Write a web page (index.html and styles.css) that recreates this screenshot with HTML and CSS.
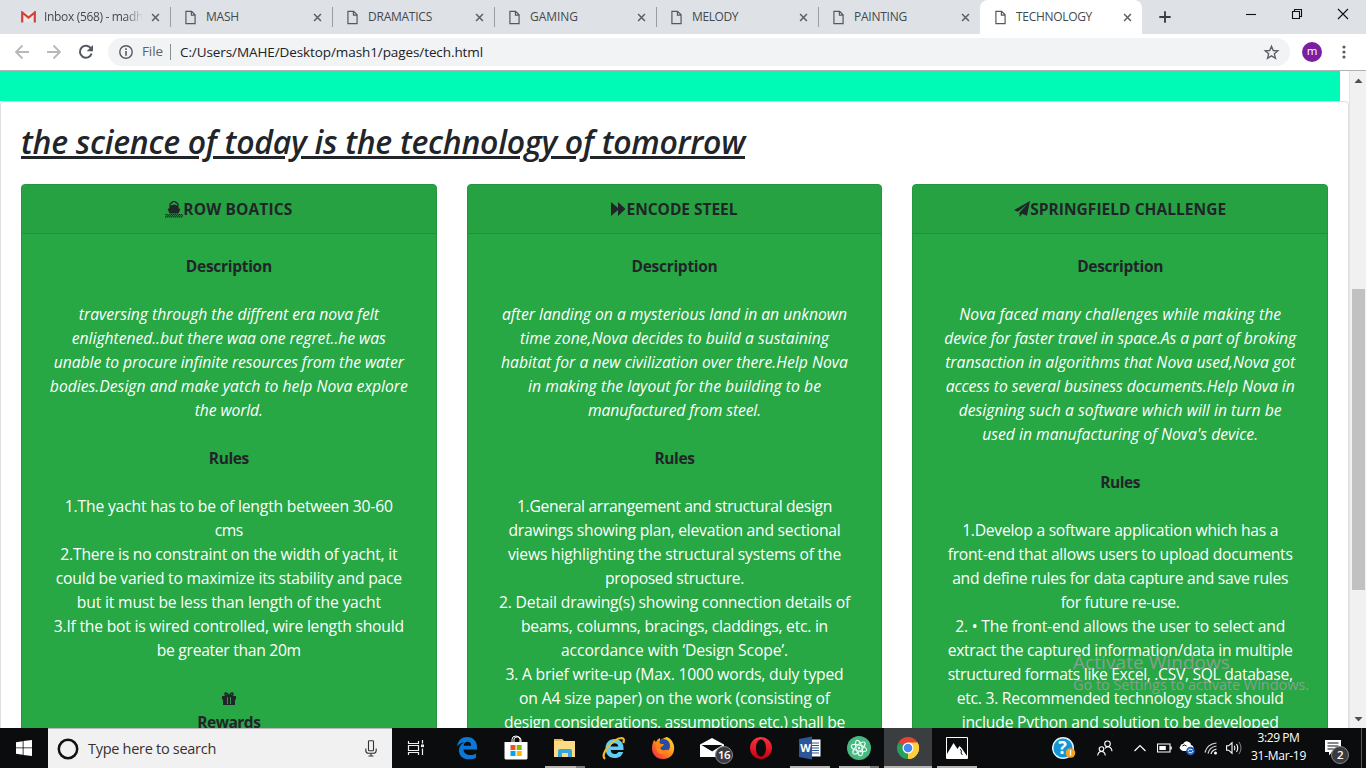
FILE: index.html
```html
<!DOCTYPE html>
<html lang="en">
<head>
<meta charset="utf-8">
<title>TECHNOLOGY</title>
<link rel="stylesheet" href="styles.css">
</head>
<body>
<svg class="defs" width="0" height="0">
  <symbol id="page" viewBox="0 0 12 15"><path d="M1 .8h6.2L11 4.6v9.6H1z M7 1v4h4" fill="none" stroke="#55585c" stroke-width="1.3"/></symbol>
  <symbol id="x" viewBox="0 0 10 10"><path d="M1.2 1.2l7.6 7.6M8.8 1.2L1.2 8.8" stroke="#5b5f63" stroke-width="1.7" fill="none"/></symbol>
</svg>

<header class="tabs">
  <div class="tab first">
    <svg class="gmail" viewBox="0 0 15 12"><path d="M1 1h13v10H1z" fill="#e8e8e8"/><path d="M1.2 11.5V1.5l6.3 5 6.3-5v10" fill="none" stroke="#d93f33" stroke-width="2.2"/></svg>
    <span class="tt fade"><span data-w="99">Inbox (568) - madh</span></span><svg class="cl"><use href="#x"/></svg>
  </div>
  <div class="tab"><svg class="pg"><use href="#page"/></svg><span class="tt"><span data-w="33">MASH</span></span><svg class="cl"><use href="#x"/></svg></div>
  <div class="tab"><svg class="pg"><use href="#page"/></svg><span class="tt"><span data-w="64">DRAMATICS</span></span><svg class="cl"><use href="#x"/></svg></div>
  <div class="tab"><svg class="pg"><use href="#page"/></svg><span class="tt"><span data-w="48">GAMING</span></span><svg class="cl"><use href="#x"/></svg></div>
  <div class="tab"><svg class="pg"><use href="#page"/></svg><span class="tt"><span data-w="46">MELODY</span></span><svg class="cl"><use href="#x"/></svg></div>
  <div class="tab"><svg class="pg"><use href="#page"/></svg><span class="tt"><span data-w="53">PAINTING</span></span><svg class="cl"><use href="#x"/></svg></div>
  <div class="tab active"><svg class="pg"><use href="#page"/></svg><span class="tt"><span data-w="76">TECHNOLOGY</span></span><svg class="cl"><use href="#x"/></svg></div>
  <svg class="plus" viewBox="0 0 12 12"><path d="M6 .3v11.4M.3 6h11.4" stroke="#3c4043" stroke-width="1.9"/></svg>
  <svg class="wins" width="106" height="14" viewBox="0 0 106 14"><g fill="none" stroke="#111" stroke-width="1.1"><path d="M0 7.5h10"/><path d="M46.5 4.5h7v7h-7z M48.5 4.5v-2h7v7h-2"/><path d="M92 2l10 10M102 2L92 12"/></g></svg>
</header>

<nav class="toolbar">
  <svg class="nav" width="108" height="34" viewBox="0 0 108 34"><g fill="none" stroke="#b6b9bc" stroke-width="1.8"><path d="M29 17H16.500M22.500 10.500L16 17l6.500 6.500"/><path d="M47 17h13M53.500 10.500L60 17l-6.500 6.500"/></g><path d="M91 13.500a6 6 0 1 0 .6 5.200" fill="none" stroke="#55595e" stroke-width="2"/><path d="M93 10v6.300h-6.300z" fill="#55595e"/></svg>
  <div class="omni">
    <svg class="info" viewBox="0 0 14 14"><circle cx="7" cy="7" r="6.200" fill="none" stroke="#55595e" stroke-width="1.400"/><path d="M7 3.300v1.600M7 6v4.700" stroke="#55595e" stroke-width="1.600"/></svg>
    <span class="file"><span data-w="21">File</span></span>
    <span class="url"><span data-w="303">C:/Users/MAHE/Desktop/mash1/pages/tech.html</span></span>
    <svg class="star" viewBox="0 0 24 24"><path d="M12 3.200l2.500 6 6.500.5-5 4.200 1.600 6.300L12 16.800l-5.600 3.400L8 13.900 3 9.700l6.500-.5z" fill="none" stroke="#5b5f63" stroke-width="1.900"/></svg>
  </div>
  <span class="avatar">m</span>
  <svg class="dots" viewBox="0 0 4 14"><g fill="#5b5f63"><circle cx="2" cy="2" r="1.600"/><circle cx="2" cy="7" r="1.600"/><circle cx="2" cy="12" r="1.600"/></g></svg>
</nav>

<div class="view">
  <main class="page">
    <div class="strip"></div>
    <section class="outer">
      <h2><span data-w="724">the science of today is the technology of tomorrow</span></h2>
      <div class="deck">
        <article class="card">
          <div class="head"><svg width="18" height="17" viewBox="0 0 18 17"><path d="M4.800 4.600Q5 1.600 7.600 1.300L8 .3h2l.4 1q2.600.3 2.800 3.300" fill="none" stroke="#212529" stroke-width="1.200"/><path d="M9 3.600l4.600 1.200v2.400l1.700.8-1.800 4.500h-9L2.700 8l1.700-.8V4.800z" fill="#212529"/><path d="M0 13.500h18M0 15.800h18" stroke="#212529" stroke-width="1.200" stroke-dasharray="1.300 .7"/><path d="M1 14.700h17" stroke="#212529" stroke-width="1.100" stroke-dasharray="1.300 .7"/></svg><span data-w="109">ROW BOATICS</span></div>
          <div class="body">
            <b><span data-w="86">Description</span></b>
            <p class="it"><span data-w="300">traversing through the diffrent era nova felt</span><span data-w="314">enlightened..but there waa one regret..he was</span><span data-w="350">unable to procure infinite resources from the water</span><span data-w="358">bodies.Design and make yatch to help Nova explore</span><span data-w="68">the world.</span></p>
            <b><span data-w="40">Rules</span></b>
            <p><span data-w="328">1.The yacht has to be of length between 30-60</span><span data-w="28">cms</span><span data-w="337">2.There is no constraint on the width of yacht, it</span><span data-w="346">could be varied to maximize its stability and pace</span><span data-w="304">but it must be less than length of the yacht</span><span data-w="350">3.If the bot is wired controlled, wire length should</span><span data-w="144">be greater than 20m</span></p>
            <svg class="gift" width="14" height="13" viewBox="0 0 14 13"><path d="M0 4h14v3.500h-1V13H1V7.500H0z" fill="#212529"/><path d="M5.500 5v7M8.500 5v7" stroke="#28a745" stroke-width=".9"/><path d="M7 4C5 .2 2.500.2 3 2.500 3.200 3.600 5 3.900 7 4 9 3.900 10.800 3.600 11 2.500 11.500.2 9 .2 7 4z" fill="none" stroke="#212529" stroke-width="1.400"/></svg>
            <b><span data-w="63">Rewards</span></b>
          </div>
        </article>
        <article class="card">
          <div class="head"><svg width="15" height="14" viewBox="0 0 15 14"><path d="M0 0l7 6V0l7.500 7L7 14V8l-7 6z" fill="#212529"/></svg><span data-w="111">ENCODE STEEL</span></div>
          <div class="body">
            <b><span data-w="86">Description</span></b>
            <p class="it"><span data-w="345">after landing on a mysterious land in an unknown</span><span data-w="309">time zone,Nova decides to build a sustaining</span><span data-w="347">habitat for a new civilization over there.Help Nova</span><span data-w="293">in making the layout for the building to be</span><span data-w="173">manufactured from steel.</span></p>
            <b><span data-w="40">Rules</span></b>
            <p><span data-w="315">1.General arrangement and structural design</span><span data-w="332">drawings showing plan, elevation and sectional</span><span data-w="333">views highlighting the structural systems of the</span><span data-w="139">proposed structure.</span><span data-w="351">2. Detail drawing(s) showing connection details of</span><span data-w="307">beams, columns, bracings, claddings, etc. in</span><span data-w="227">accordance with ‘Design Scope’.</span><span data-w="338">3. A brief write-up (Max. 1000 words, duly typed</span><span data-w="311">on A4 size paper) on the work (consisting of</span><span data-w="341">design considerations, assumptions etc.) shall be</span></p>
          </div>
        </article>
        <article class="card">
          <div class="head"><svg width="16" height="16" viewBox="0 0 16 16"><path d="M16 0L0 9l3.800 1.700L13.500 3 5.500 11.500V16l2.700-3.200 4.800 2z" fill="#212529"/></svg><span data-w="196">SPRINGFIELD CHALLENGE</span></div>
          <div class="body">
            <b><span data-w="86">Description</span></b>
            <p class="it"><span data-w="322">Nova faced many challenges while making the</span><span data-w="352">device for faster travel in space.As a part of broking</span><span data-w="350">transaction in algorithms that Nova used,Nova got</span><span data-w="349">access to several business documents.Help Nova in</span><span data-w="323">designing such a software which will in turn be</span><span data-w="276">used in manufacturing of Nova's device.</span></p>
            <b><span data-w="40">Rules</span></b>
            <p><span data-w="316">1.Develop a software application which has a</span><span data-w="345">front-end that allows users to upload documents</span><span data-w="336">and define rules for data capture and save rules</span><span data-w="119">for future re-use.</span><span data-w="330">2. • The front-end allows the user to select and</span><span data-w="345">extract the captured information/data in multiple</span><span data-w="345">structured formats like Excel, .CSV, SQL database,</span><span data-w="327">etc. 3. Recommended technology stack should</span><span data-w="317">include Python and solution to be developed</span></p>
          </div>
        </article>
      </div>
    </section>
  </main>
  <aside class="scroll">
    <svg width="9" height="5" viewBox="0 0 9 5"><path d="M.5 5l4-4.500 4 4.500z" fill="#505050"/></svg>
    <div class="thumb"></div>
    <svg class="down" width="9" height="5" viewBox="0 0 9 5"><path d="M.5 0l4 4.500L8.500 0z" fill="#505050"/></svg>
  </aside>
  <div class="mark"><div class="m1"><span data-w="157">Activate Windows</span></div><div class="m2"><span data-w="236">Go to Settings to activate Windows.</span></div></div>
</div>

<footer class="bar">
  <div class="start"><svg width="16" height="16" viewBox="0 0 16 16"><path d="M0 2.200L6.700 1.200v6.300H0zM7.500 1L16 0v7.500H7.500zM0 8.300h6.700v6.400L0 13.800zM7.500 8.300H16V16l-8.500-1.100z" fill="#fff"/></svg></div>
  <div class="search">
    <svg width="22" height="22" viewBox="0 0 22 22"><circle cx="11" cy="11" r="9.200" fill="none" stroke="#111" stroke-width="2.500"/></svg>
    <span class="st"><span data-w="128">Type here to search</span></span>
    <svg class="mic" width="12" height="17" viewBox="0 0 12 17"><g fill="none" stroke="#333" stroke-width="1.100"><rect x="3.500" y=".7" width="5" height="10" rx=".8"/><path d="M.8 8.500v2q0 2.800 3 2.800h4.400q3 0 3-2.800v-2M6 13.500v2.500M3.500 16h5"/></g></svg>
  </div>
  <div class="cell tv"><svg width="18" height="16" viewBox="0 0 18 16"><g fill="none" stroke="#eee" stroke-width="1.200"><path d="M1.500 1v2.500h10V1M1.500 15v-2.500h10V15M1.500 5.500h10v5h-10zM15.500 0v3.500M15.500 8.500V15"/><path d="M14 5.800h3" stroke-width="2.600"/></g></svg></div>
  <div class="cell"><svg width="22" height="24" viewBox="0 0 22 24"><path d="M1 10.500C2 4 6 1 11 1c6.500 0 10 4.500 10 10v2.500H7.500c.2 4 3.500 5.500 6.500 5.500 2.400 0 4.500-.7 6-1.600v4.300c-2 1.200-4.300 1.600-7 1.600-6 0-10-3.300-10-8.800 0-3.700 2-6.600 5.500-8.200C5.500 6.800 3 8 1 10.500zM7.600 9.700h7.600c0-2.600-1.400-3.900-3.600-3.900-2.200 0-3.600 1.500-4 3.900z" fill="#0b78d6"/></svg></div>
  <div class="cell"><svg width="24" height="26" viewBox="0 0 24 26"><path d="M8 8V4.500q0-3.500 4-3.500t4 3.500V8M10 7V4q0-2 3.500-2T17 5v2" fill="none" stroke="#fff"/><path d="M.5 7h23v16q0 1.500-1.500 1.500H2Q.5 24.500.5 23z" fill="#fff"/><path d="M6.500 10h5v5h-5z" fill="#f25022"/><path d="M12.700 10h5v5h-5z" fill="#7fba00"/><path d="M6.500 16h5v5h-5z" fill="#00a4ef"/><path d="M12.700 16h5v5h-5z" fill="#ffb900"/></svg></div>
  <div class="cell run two"><svg width="22" height="20" viewBox="0 0 22 20"><path d="M0 1h8l2 2h11v16H0z" fill="#fbdc85"/><path d="M0 1h8l1.500 2H0z" fill="#e8b64a"/><path d="M4 19v-6q0-2 2-2h10q2 0 2 2v6h-4v-4H8v4z" fill="#36a5de"/></svg></div>
  <div class="cell"><svg width="24" height="25" viewBox="0 0 24 25"><path d="M12.500 3C18 3 21.500 6.500 21.500 12v2H8.700c.3 3 2 4 4 4 1.800 0 2.800-.6 3.500-2h5c-1.500 4.500-4.500 6-8.700 6C7 22 3.500 18 3.500 12.500S7 3 12.500 3zM8.700 10.500h7.600c-.3-2.300-1.800-3.300-3.700-3.300-2 0-3.500 1-3.900 3.300z" fill="#62cdf4"/><path d="M3 23C-3 18 12 2 20 2q3 .5 1.200 5" fill="none" stroke="#f0bc22" stroke-width="2.200"/></svg></div>
  <div class="cell"><svg width="24" height="24" viewBox="0 0 24 24"><defs><linearGradient id="ff" x1="1" y1="0" x2="0" y2="1"><stop offset="0" stop-color="#ffe536"/><stop offset=".5" stop-color="#ff8a16"/><stop offset="1" stop-color="#ee1a55"/></linearGradient></defs><path d="M3 4l2 2q1-3 4-4v2q6-3 7-3 5 2 6.800 8C24.500 17 20 23 12 23 5 23 1 18 1 12.500 1 9 2 6 3 4z" fill="url(#ff)"/><path d="M9 4q3-2 7 0 3 2 3 6 0 5-5 6-4-1-5-4l2-2-3-2z" fill="#284da0"/><path d="M5 7q4-1 5 1h3q-1 3-4 3 1 4 5 3 3-.5 4 0-2 4-7 4-6-1-6-8z" fill="#ff8519"/></svg></div>
  <div class="cell mail"><svg width="24" height="20" viewBox="0 0 24 20"><path d="M0 6.500L12 0l12 6.500V19H0z" fill="#fff"/><path d="M1.500 7h21L12 13.500z" fill="#0b0c0d"/><path d="M0 7.500l12 6.500" stroke="#fff" fill="none"/></svg><span class="badge">16</span></div>
  <div class="cell"><svg width="24" height="24" viewBox="0 0 24 24"><defs><linearGradient id="op" x1="0" y1="0" x2="0" y2="1"><stop offset="0" stop-color="#ff3340"/><stop offset="1" stop-color="#c50012"/></linearGradient></defs><path fill-rule="evenodd" d="M12 1a11 11 0 1 0 0 22 11 11 0 1 0 0-22zM12 3.500c3 0 5 3.500 5 8.500s-2 8.500-5 8.500-5-3.500-5-8.500 2-8.500 5-8.500z" fill="url(#op)"/></svg></div>
  <div class="cell run"><svg width="24" height="24" viewBox="0 0 24 24"><path d="M12 3.500h10.500v17H12z" fill="#fff"/><path d="M14 7h7M14 9.500h7M14 12h7M14 14.500h7M14 17h7" stroke="#2b579a" stroke-width="1.100"/><path d="M1 3l13-2.500v23L1 21z" fill="#2b579a"/><text x="7.500" y="16" text-anchor="middle" class="w">W</text></svg></div>
  <div class="cell run two"><svg width="24" height="24" viewBox="0 0 24 24"><circle cx="12" cy="12" r="12" fill="#47b881"/><g fill="none" stroke="#e5fff0" stroke-width="1.100"><ellipse cx="12" cy="12" rx="3" ry="8" transform="rotate(-15 12 12)"/><ellipse cx="12" cy="12" rx="3" ry="8" transform="rotate(45 12 12)"/><ellipse cx="12" cy="12" rx="3" ry="8" transform="rotate(105 12 12)"/></g><circle cx="12" cy="12" r="1.200" fill="#fff"/></svg></div>
  <div class="cell on"><svg width="24" height="24" viewBox="0 0 24 24"><path d="M12 12L2.470 6.500a11 11 0 0 1 19.060 0z" fill="#e14334"/><path d="M12 12L21.530 6.500A11 11 0 0 1 12 23z" fill="#fccf3d"/><path d="M12 12v11A11 11 0 0 1 2.470 6.500z" fill="#26a15b"/><path d="M12 6.500h9.530A11 11 0 0 1 12 23l5-8z" fill="#fccf3d"/><circle cx="12" cy="12" r="5.500" fill="#fff"/><circle cx="12" cy="12" r="4.300" fill="#4587f3"/></svg></div>
  <div class="cell run"><svg width="22" height="22" viewBox="0 0 22 22"><path d="M.5.500h21v21H.5z" fill="none" stroke="#fff"/><path d="M1 17l6.500-11 4 6 2-3 2 2 5.500 8v2H1z" fill="#fff"/><path d="M14 12l1.500 2-.5 2 1.500 2" stroke="#111" fill="none"/></svg></div>

  <div class="tray">
    <div class="ti help"><svg width="24" height="24" viewBox="0 0 24 24"><circle cx="11" cy="12" r="10.300" fill="#1693d2" stroke="#dff3fb" stroke-width="1.500"/><text x="10.500" y="18" text-anchor="middle" class="q">?</text><circle cx="18.500" cy="17" r="4.800" fill="#f5a51b"/><path d="M18.500 14v5.500" stroke="#fff" stroke-width="1.300"/></svg></div>
    <div class="ti people"><svg width="16" height="17" viewBox="0 0 16 17"><g fill="none" stroke="#fff" stroke-width="1.100"><circle cx="10.500" cy="3.800" r="2.800"/><circle cx="4.500" cy="9" r="2.300"/><path d="M.7 15.500q.5-4 3.800-4t3.800 4M8 8.500q2.500-3.200 5.500-.8 1.300 1 1.500 3.500"/></g></svg></div>
    <div class="ti chev"><svg width="12" height="8" viewBox="0 0 12 8"><path d="M.5 7L6 1.500 11.500 7" fill="none" stroke="#fff" stroke-width="1.200"/></svg></div>
    <div class="ti bat"><svg width="15" height="10" viewBox="0 0 15 10"><path d="M.5 1h12.500v8H.5zM14.200 3.500v3" fill="none" stroke="#fff" stroke-width="1.100"/><path d="M2.300 3h6.500v4H2.300z" fill="#fff"/></svg></div>
    <div class="ti"><svg width="16" height="15" viewBox="0 0 16 15"><path d="M2 9Q-.5 7 1.500 5q0-2 2.500-2 2-4 6-2 2 1 2 3 3 .5 2.500 3.500L12 10H4z" fill="#fff"/><path d="M3.500 5q2-2 4 0" stroke="#111" fill="none"/><circle cx="11.500" cy="10" r="4.300" fill="#1c62c9"/><path d="M9 10q1-3 4.500-1M14 10q-1 3-4.500 1" stroke="#fff" fill="none"/></svg></div>
    <div class="ti"><svg width="14" height="14" viewBox="0 0 14 14"><g fill="none" stroke="#ddd" stroke-width="1.200"><path d="M1 11.500Q3 3 12.500 2M4 12.500Q5.500 6 12.500 5M7 13q1-4 5.500-4.800"/></g><circle cx="11.500" cy="12" r="1.500" fill="#fff"/></svg></div>
    <div class="ti vol"><svg width="17" height="14" viewBox="0 0 17 14"><g fill="none" stroke="#fff" stroke-width="1.100"><path d="M.6 4.800h2L6 1.800v10.400l-3.400-3h-2zM8.300 4.800q1.300 2.200 0 4.400M10.500 3q2.500 4 0 8"/><path d="M13 1q4 6 0 12" stroke="#777"/></g></svg></div>
    <div class="clock"><div><span data-w="42">3:29 PM</span></div><div><span data-w="55">31-Mar-19</span></div></div>
    <div class="ac"><svg width="16" height="16" viewBox="0 0 16 16"><path d="M0 0h16v12H7l-3 3.500V12H0z" fill="#fff"/><path d="M2.500 3h11M2.500 6h11M2.500 9h7" stroke="#111" stroke-width="1.100"/></svg><span class="badge">2</span></div>
  </div>
</footer>
<script src="fit.js"></script>
</body>
</html>
```
FILE: styles.css
```css
* { box-sizing: border-box; }
html, body { margin: 0; height: 768px; overflow: hidden; }
body { display: flex; flex-direction: column; font-family: "Open Sans", "Noto Sans", sans-serif; background: #fff; color: #212529; }
svg { display: block; flex: none; }
.defs { position: absolute; }
[data-w] { display: inline-block; white-space: nowrap; }

.tabs { flex: none; height: 34px; background: #dee1e6; display: flex; align-items: center; padding-left: 8px; }
.tab { width: 162px; height: 34px; padding: 0 9px 0 15px; display: flex; align-items: center; font-size: 12px; color: #45494d; background: linear-gradient(#9a9da1, #9a9da1) left 0 top 7px / 1px 20px no-repeat; }
.tab.first, .tab.active { background-image: none; }
.tab.first { padding-left: 13px; }
.pg { width: 11px; height: 15px; margin-right: 10px; }
.gmail { width: 15px; height: 12px; margin-right: 8px; }
.tt { flex: 1; overflow: hidden; line-height: 16px; white-space: nowrap; }
.tt.fade { -webkit-mask-image: linear-gradient(to right, #000 82%, transparent 100%); mask-image: linear-gradient(to right, #000 82%, transparent 100%); }
.cl { width: 9px; height: 9px; margin: 0 1px 0 8px; }
.tab.active { background-color: #fff; border-radius: 8px 8px 0 0; }
.plus { width: 12px; height: 12px; margin-left: 17px; }
.wins { margin: -7px 0 0 75px; }

.toolbar { flex: none; height: 37px; border-bottom: 1px solid #b0b2b5; display: flex; align-items: center; background: #fff; }
.omni { width: 1182px; height: 28px; border-radius: 14px; background: #f1f3f4; display: flex; align-items: center; padding: 0 11px; font-size: 13.500px; }
.info { width: 14px; height: 14px; }
.file { margin-left: 9px; width: 29px; height: 16px; line-height: 15px; border-right: 1px solid #8b8e91; color: #5f6368; }
.url { margin-left: 9px; flex: 1; line-height: 16px; color: #202124; }
.star { width: 17px; height: 17px; margin-right: -1px; }
.avatar { width: 20px; height: 20px; border-radius: 50%; background: #7b1fa2; color: #fff; font-size: 11.500px; line-height: 18px; text-align: center; margin-left: 12px; }
.dots { width: 4px; height: 14px; margin-left: 20px; }

.view { flex: none; height: 657px; display: flex; position: relative; overflow: hidden; }
.page { width: 1349px; }
.strip { height: 30px; width: 1340px; background: #00fbb7; }
.outer { height: 900px; border: 1px solid #dfdfdf; border-radius: 4px; padding: 20px; }
h2 { margin: 0 0 23px; font-size: 32px; line-height: 39px; font-weight: 600; font-style: italic; }
h2 span { text-decoration: underline; text-decoration-thickness: 3px; text-underline-offset: 2px; }
.deck { display: grid; grid-template-columns: repeat(3, 1fr); gap: 30px; }
.card { height: 700px; background: #28a745; border: 1px solid #249640; border-radius: 4px; }
.head { height: 49px; background: #27a243; border-bottom: 1px solid #24903d; border-radius: 3px 3px 0 0; display: flex; align-items: center; justify-content: center; font-size: 15.500px; font-weight: 700; line-height: 24px; }
.body { padding-top: 20px; font-size: 15.700px; line-height: 24px; display: flex; flex-direction: column; align-items: center; }
.body b { font-size: 15.500px; height: 24px; }
.body p { margin: 24px 0; display: flex; flex-direction: column; align-items: center; color: #fff; }
.it { font-style: italic; }
.gift { margin: 6px 0 5px; }

.scroll { width: 17px; background: #f1f1f1; border-left: 1px solid #e4e4e4; display: flex; flex-direction: column; align-items: center; padding: 7px 0 6px; }
.thumb { width: 13px; height: 301px; margin-top: 206px; background: #c1c1c1; }
.down { margin-top: auto; }
.mark { position: absolute; left: 1073px; top: 579px; color: rgba(172, 158, 172, .72); }
.m1 { font-size: 19px; line-height: 24px; }
.m2 { font-size: 14.500px; line-height: 21px; }

.bar { flex: none; height: 40px; background: #0b0c0d; display: flex; color: #fff; }
.start { width: 48px; display: flex; align-items: center; justify-content: center; }
.search { width: 344px; background: #f1f1f1; border-top: 1px solid #b8b8b8; display: flex; align-items: center; padding: 0 15px 0 9px; }
.st { flex: 1; margin-left: 9px; font-size: 14.500px; color: #333; }
.cell { width: 48px; margin-right: 1px; display: flex; align-items: center; justify-content: center; position: relative; }
.cell.tv { margin-right: 3px; }
.cell.run { background: linear-gradient(#b8b4b2, #b8b4b2) 4px 38px / 40px 2px no-repeat; }
.cell.two { background: linear-gradient(to right, #b8b4b2 31px, #77797b 31px) 4px 38px / 40px 2px no-repeat; }
.cell.on { background: linear-gradient(#b8b4b2, #b8b4b2) 0 38px / 48px 2px no-repeat #3b3e40; }
.w { font: 700 11px "Open Sans", sans-serif; fill: #fff; }
.q { font: 700 18px "Open Sans", sans-serif; fill: #fff; }
.badge { position: absolute; width: 18px; height: 18px; border-radius: 50%; background: #393b3e; border: 1px solid #85878a; font-size: 11.500px; line-height: 15px; text-align: center; font-weight: 600; letter-spacing: -.5px; }
.mail .badge { left: 27px; top: 18px; }
.tray { margin-left: auto; margin-right: 4px; display: flex; width: 319px; border-right: 1px solid #56595b; }
.ti { width: 24px; display: flex; align-items: center; justify-content: center; }
.ti.help { width: 42px; }
.ti.people { width: 40px; }
.ti.chev { width: 29px; }
.ti.bat { width: 21px; }
.ti.vol { width: 22px; }
.clock { width: 67px; padding-top: 1px; font-size: 12px; line-height: 18px; text-align: center; }
.ac { position: relative; padding: 12px 0 0 13px; }
.ac .badge { left: 19px; top: 18px; }
```
FILE: fit.js
```js
// Spread each label's letters so that it spans its declared width.
document.querySelectorAll('[data-w]').forEach(function (el) {
  var natural = el.getBoundingClientRect().width;
  var gap = (Number(el.dataset.w) - natural) / el.textContent.length;
  el.style.letterSpacing = gap.toFixed(3) + 'px';
});
```
